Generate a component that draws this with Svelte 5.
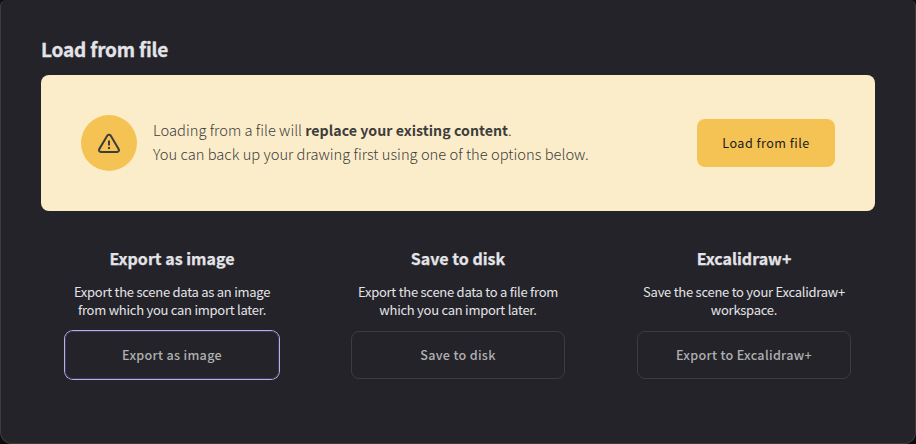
<script>
  const actions = [
    { title: 'Export as image', id: 'image', lines: ['Export the scene data as an image', 'from which you can import later.'], button: 'Export as image', focused: true },
    { title: 'Save to disk', id: 'disk', lines: ['Export the scene data to a file from', 'which you can import later.'], button: 'Save to disk' },
    { title: 'Excalidraw+', id: 'plus', lines: ['Save the scene to your Excalidraw+', 'workspace.'], button: 'Export to Excalidraw+' }
  ];
</script>

<div class="backdrop">
  <main class="modal">
    <h3>Load from file</h3>
    <section class="banner">
      <div class="badge">
        <svg viewBox="0 0 24 24" width="24" height="24" fill="none" stroke="currentColor" stroke-width="2" stroke-linecap="round" stroke-linejoin="round">
          <path d="M12 8.5v5" stroke-linecap="butt" />
          <path d="M10.363 3.591l-8.106 13.534a1.914 1.914 0 0 0 1.636 2.871h16.214a1.914 1.914 0 0 0 1.636 -2.87l-8.106 -13.536a1.914 1.914 0 0 0 -3.274 0z" />
          <path d="M11 16h2" stroke-linecap="butt" />
        </svg>
      </div>
      <p class="message">
        <span class="line">Loading from a file will <strong>replace your existing content</strong>.</span>
        <span class="line">You can back up your drawing first using one of the options below.</span>
      </p>
      <button class="load">Load from file</button>
    </section>
    <section class="actions">
      {#each actions as action (action.id)}
        <article class={action.id}>
          <h4>{action.title}</h4>
          <p>{#each action.lines as line}<span class="line">{line}</span>{/each}</p>
          <button class:focused={action.focused}>{action.button}</button>
        </article>
      {/each}
    </section>
  </main>
</div>

<style>
  :global(body) { margin: 0; background: #121212; }
  .backdrop {
    height: 444px;
    background: #0d0d0d;
    font-family: "Noto Sans CJK SC", "Noto Sans", sans-serif;
    overflow: hidden;
  }
  .modal {
    box-sizing: border-box;
    height: 444px;
    padding: 37px 40px 0;
    background: #232329;
    border: 1px solid #3d3d3d;
    border-top: 0;
    border-radius: 6px 6px 12px 12px;
  }
  h3, h4, p { margin: 0; }
  h3 {
    height: 38px;
    line-height: 24px;
    font-size: 19px;
    letter-spacing: -0.17px;
    font-weight: 700;
    color: #e3e3e8;
    white-space: nowrap;
    -webkit-text-stroke: 0.3px currentColor;
  }
  .banner {
    box-sizing: border-box;
    height: 136px;
    padding: 0 40px;
    display: flex;
    align-items: center;
    gap: 16px;
    border-radius: 8px;
    background: #fcedca;
  }
  .badge {
    box-sizing: border-box;
    width: 56px;
    height: 56px;
    padding-top: 1px;
    flex: none;
    display: flex;
    align-items: center;
    justify-content: center;
    border-radius: 50%;
    background: #f5c354;
    color: #3d3d3d;
  }
  .badge svg { display: block; }
  .line { display: block; white-space: nowrap; }
  .message {
    flex: 1;
    padding-bottom: 2px;
    font-size: 14.7px;
    letter-spacing: 0.015px;
    line-height: 24px;
    font-weight: 300;
    color: #3d3d3d;
  }
  .message strong { font-weight: 700; font-size: 14.2px; line-height: 1; letter-spacing: 0.02px; }
  button {
    box-sizing: border-box;
    height: 48px;
    padding: 0 0 2px;
    border-radius: 8px;
    font-family: inherit;
    font-size: 12.6px;
    white-space: nowrap;
    letter-spacing: 0.3px;
  }
  .load {
    width: 138px;
    border: 0;
    background: #f5c354;
    color: #1b1b1f;
    font-weight: 400;
    letter-spacing: 0.46px;
  }
  .actions {
    display: grid;
    grid-template-columns: repeat(3, 1fr);
    gap: 24px;
    padding-top: 35px;
  }
  article {
    padding: 0 24px;
    display: flex;
    flex-direction: column;
    text-align: center;
    color: #e3e3e8;
  }
  h4 {
    height: 37px;
    font-size: 16px;
    line-height: 24px;
    font-weight: 700;
    white-space: nowrap;
    -webkit-text-stroke: 0.25px currentColor;
  }
  article p {
    height: 48px;
    display: flex;
    flex-direction: column;
    align-items: center;
    font-size: 13px;
    letter-spacing: -0.26px;
    line-height: 18px;
    font-weight: 400;
  }
  article button {
    border: 1px solid #3d3d3d;
    background: transparent;
    color: #b0b0b0;
    font-weight: 500;
  }
  .focused { box-shadow: 0 0 0 1px #b2aeff; }
</style>
